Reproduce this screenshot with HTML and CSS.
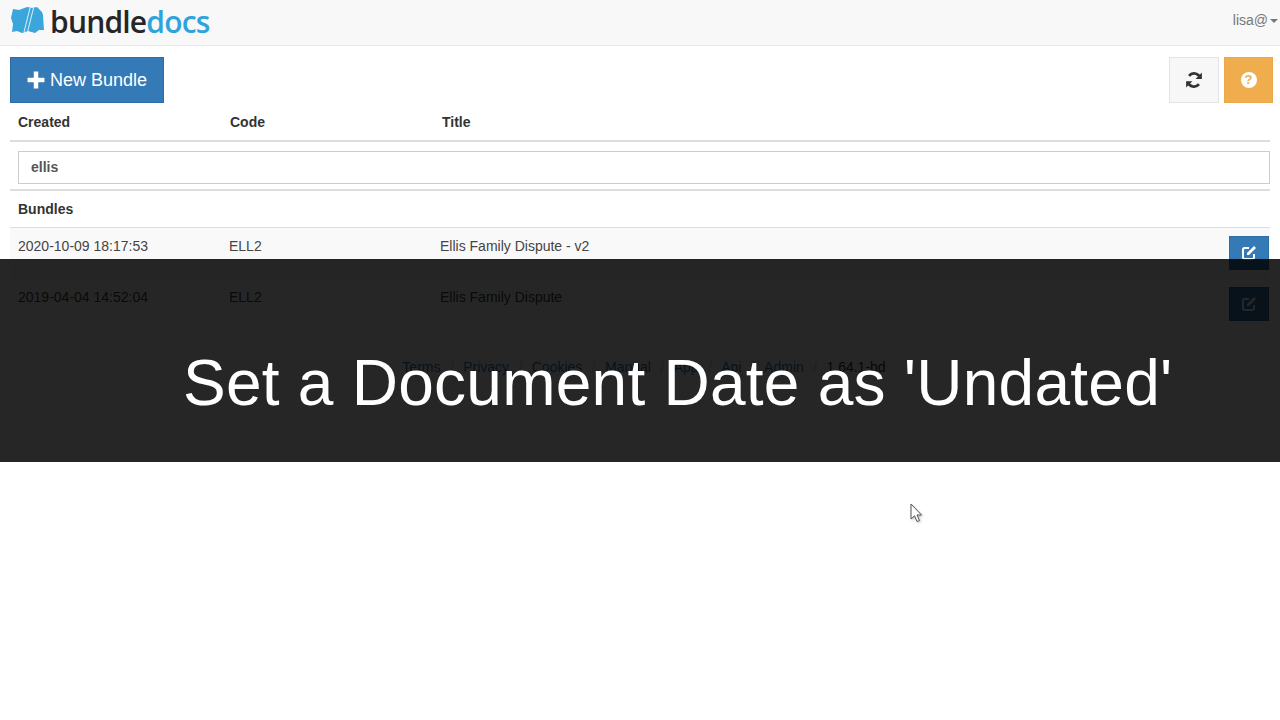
FILE: index.html
```html
<!DOCTYPE html>
<html lang="en">
<head>
    <meta charset="UTF-8">
    <title>Bundledocs - Bundles</title>
    <link rel="stylesheet" href="styles.css">
</head>
<body>
    <header class="navbar">
        <a class="brand" href="#">
            <svg class="brand-icon" viewBox="0 0 36 28" width="36" height="28">
                <path d="M3 3 L9 4 L17 1 L22 2 L27 1 L32 6 L33 9 L34 24 L29 24 L25 27 L18 25 L12 27 L7 25 L2 26 L3 18 L1 12 Z" fill="#3ba6db"/>
                <path d="M14 26 L20 2 M17.500 26 L23.500 2" stroke="#dff1fa" stroke-width="1" fill="none"/>
            </svg>
            <span class="brand-name">bundle<span class="brand-docs">docs</span></span>
        </a>
        <div class="user-menu">lisa@<span class="caret"></span></div>
    </header>

    <div class="toolbar">
        <button class="btn btn-primary btn-new">
            <svg viewBox="0 0 16 16" width="18" height="18"><path d="M6 .5h4v5.500h5.500v4H10v5.500H6V10H.5V6H6z" fill="#fff"/></svg>
            New Bundle
        </button>
        <div class="toolbar-right">
            <button class="btn btn-default btn-refresh">
                <svg viewBox="0 0 16 16" width="18" height="18"><path d="M13.400 6.200A5.600 5.600 0 0 0 3.600 4.300M2.600 9.800a5.600 5.600 0 0 0 9.800 1.900" stroke="#333" stroke-width="2.400" fill="none"/><path d="M15 1.400v5.600H9.400zM1 14.600V9h5.600z" fill="#333"/></svg>
            </button>
            <button class="btn btn-warning btn-help">
                <span class="help-icon">?</span>
            </button>
        </div>
    </div>

    <div class="table-head">
        <span class="col-created">Created</span>
        <span class="col-code">Code</span>
        <span class="col-title">Title</span>
    </div>

    <div class="filter-row">
        <input class="filter-input" type="text" value="ellis">
    </div>

    <h4 class="section-title">Bundles</h4>

    <div class="bundle-row odd">
        <span class="cell-created">2020-10-09 18:17:53</span>
        <span class="cell-code">ELL2</span>
        <span class="cell-title">Ellis Family Dispute - v2</span>
        <button class="btn btn-primary btn-edit">
            <svg viewBox="0 0 16 16" width="16" height="16"><path d="M8 3H3.500A1.500 1.500 0 0 0 2 4.500V12.500A1.500 1.500 0 0 0 3.500 14H11.500A1.500 1.500 0 0 0 13 12.500V9" stroke="#fff" stroke-width="2" fill="none"/><path d="M6 8L13 1L15 3L8 10H6Z" fill="#fff"/></svg>
        </button>
    </div>
    <div class="bundle-row">
        <span class="cell-created">2019-04-04 14:52:04</span>
        <span class="cell-code">ELL2</span>
        <span class="cell-title">Ellis Family Dispute</span>
        <button class="btn btn-primary btn-edit">
            <svg viewBox="0 0 16 16" width="16" height="16"><path d="M8 3H3.500A1.500 1.500 0 0 0 2 4.500V12.500A1.500 1.500 0 0 0 3.500 14H11.500A1.500 1.500 0 0 0 13 12.500V9" stroke="#fff" stroke-width="2" fill="none"/><path d="M6 8L13 1L15 3L8 10H6Z" fill="#fff"/></svg>
        </button>
    </div>

    <footer class="page-footer">
        <a href="#">Terms</a><i>/</i>
        <a href="#">Privacy</a><i>/</i>
        <a href="#">Cookies</a><i>/</i>
        <a href="#">Manual</a><i>/</i>
        <a href="#">App</a><i>/</i>
        <a href="#">Api</a><i>/</i>
        <a href="#">Admin</a><i>/</i>
        <span>1.64.1-bd</span>
    </footer>

    <!-- video caption over the page -->
    <div class="caption">Set a Document Date as 'Undated'</div>

    <svg class="cursor" viewBox="0 0 14 20" width="14" height="20">
        <path d="M1 1V16L4.500 12.800L7 18.500L9.500 17.500L7 12H11.500Z" fill="#fff" stroke="#555" stroke-width="1"/>
    </svg>
</body>
</html>
```

FILE: styles.css
```css
* {
    box-sizing: border-box;
}
html, body {
    height: 100%;
}
body {
    margin: 0;
    overflow: hidden;
    position: relative;
    background-color: #fff;
    color: #333;
    font-family: "Liberation Sans", Arial, sans-serif;
    font-size: 14px;
    line-height: 20px;
}
a {
    text-decoration: none;
    color: #337ab7;
}
.navbar {
    height: 46px;
    background-color: #f8f8f8;
    border-bottom: 1px solid #e7e7e7;
    display: flex;
    justify-content: space-between;
    padding: 4px 2px 0 10px;
}
.brand {
    display: flex;
    align-items: flex-start;
    gap: 4px;
}
.brand-icon {
    margin-top: 2px;
}
.brand-name {
    font-family: "Open Sans", sans-serif;
    font-size: 30px;
    line-height: 36px;
    font-weight: 600;
    letter-spacing: -0.8px;
    color: #262626;
}
.brand-docs {
    color: #2fa4dc;
}
.user-menu {
    color: #777;
    padding-top: 6px;
}
.caret {
    display: inline-block;
    margin-left: 2px;
    vertical-align: middle;
    border-top: 4px solid #777;
    border-left: 4px solid transparent;
    border-right: 4px solid transparent;
}
.toolbar {
    display: flex;
    justify-content: space-between;
    padding: 11px 7px 0 10px;
}
.toolbar-right {
    display: flex;
    gap: 5px;
}
.btn {
    border: 1px solid transparent;
    border-radius: 0;
    font-family: inherit;
    display: flex;
    align-items: center;
    justify-content: center;
}
.btn-primary {
    background-color: #337ab7;
    border-color: #2e6da4;
    color: #fff;
}
.btn-default {
    background-color: #f7f7f7;
    border-color: #e3e3e3;
}
.btn-warning {
    background-color: #f0ad4e;
    border-color: #eca74a;
}
.btn-new {
    width: 154px;
    height: 46px;
    font-size: 18px;
    gap: 5px;
}
.btn-refresh {
    width: 50px;
    height: 46px;
}
.btn-help {
    width: 49px;
    height: 46px;
}
.help-icon {
    width: 16px;
    height: 16px;
    border-radius: 50%;
    background-color: #fff;
    color: #f0ad4e;
    font-size: 13px;
    font-weight: bold;
    line-height: 16px;
    text-align: center;
}
.table-head {
    height: 39px;
    margin: 0 10px;
    padding-top: 9px;
    border-bottom: 2px solid #ddd;
    display: flex;
    font-weight: bold;
}
.col-created {
    margin-left: 8px;
    width: 212px;
}
.col-code {
    width: 212px;
}
.filter-row {
    height: 49px;
    margin: 0 10px;
    padding: 9px 0 0 8px;
    border-bottom: 2px solid #ddd;
}
.filter-input {
    display: block;
    width: 1252px;
    height: 33px;
    border: 1px solid #ccc;
    padding: 0 12px 2px;
    font-family: inherit;
    font-size: 14px;
    font-weight: bold;
    color: #555;
    outline: none;
}
.section-title {
    margin: 0 10px;
    height: 36px;
    padding: 8px 0 0 8px;
    font-size: 14px;
    line-height: 20px;
    font-weight: bold;
}
.bundle-row {
    height: 51px;
    margin: 0 10px;
    padding: 8px 1px 0 8px;
    border-top: 1px solid #eee;
    display: flex;
    align-items: flex-start;
    color: #444;
}
.bundle-row.odd {
    background-color: #f9f9f9;
    border-top-color: #ddd;
}
.cell-created {
    width: 211px;
}
.cell-code {
    width: 211px;
}
.cell-title {
    flex-grow: 1;
}
.btn-edit {
    width: 40px;
    height: 34px;
    padding-bottom: 2px;
}
.page-footer {
    display: flex;
    justify-content: center;
    gap: 9.4px;
    margin-top: 28px;
    padding-left: 8px;
}
.page-footer i {
    font-style: normal;
    color: #ccc;
}
.caption {
    position: absolute;
    top: 259px;
    left: 0;
    width: 100%;
    height: 203px;
    padding: 89px 0 0 183px;
    background-color: rgba(0, 0, 0, 0.85);
    color: #fff;
    font-size: 64px;
    line-height: 70px;
    letter-spacing: 0.25px;
    white-space: nowrap;
}
.cursor {
    position: absolute;
    left: 910px;
    top: 503px;
    filter: drop-shadow(1px 1px 1px rgba(0, 0, 0, 0.25));
}
```
